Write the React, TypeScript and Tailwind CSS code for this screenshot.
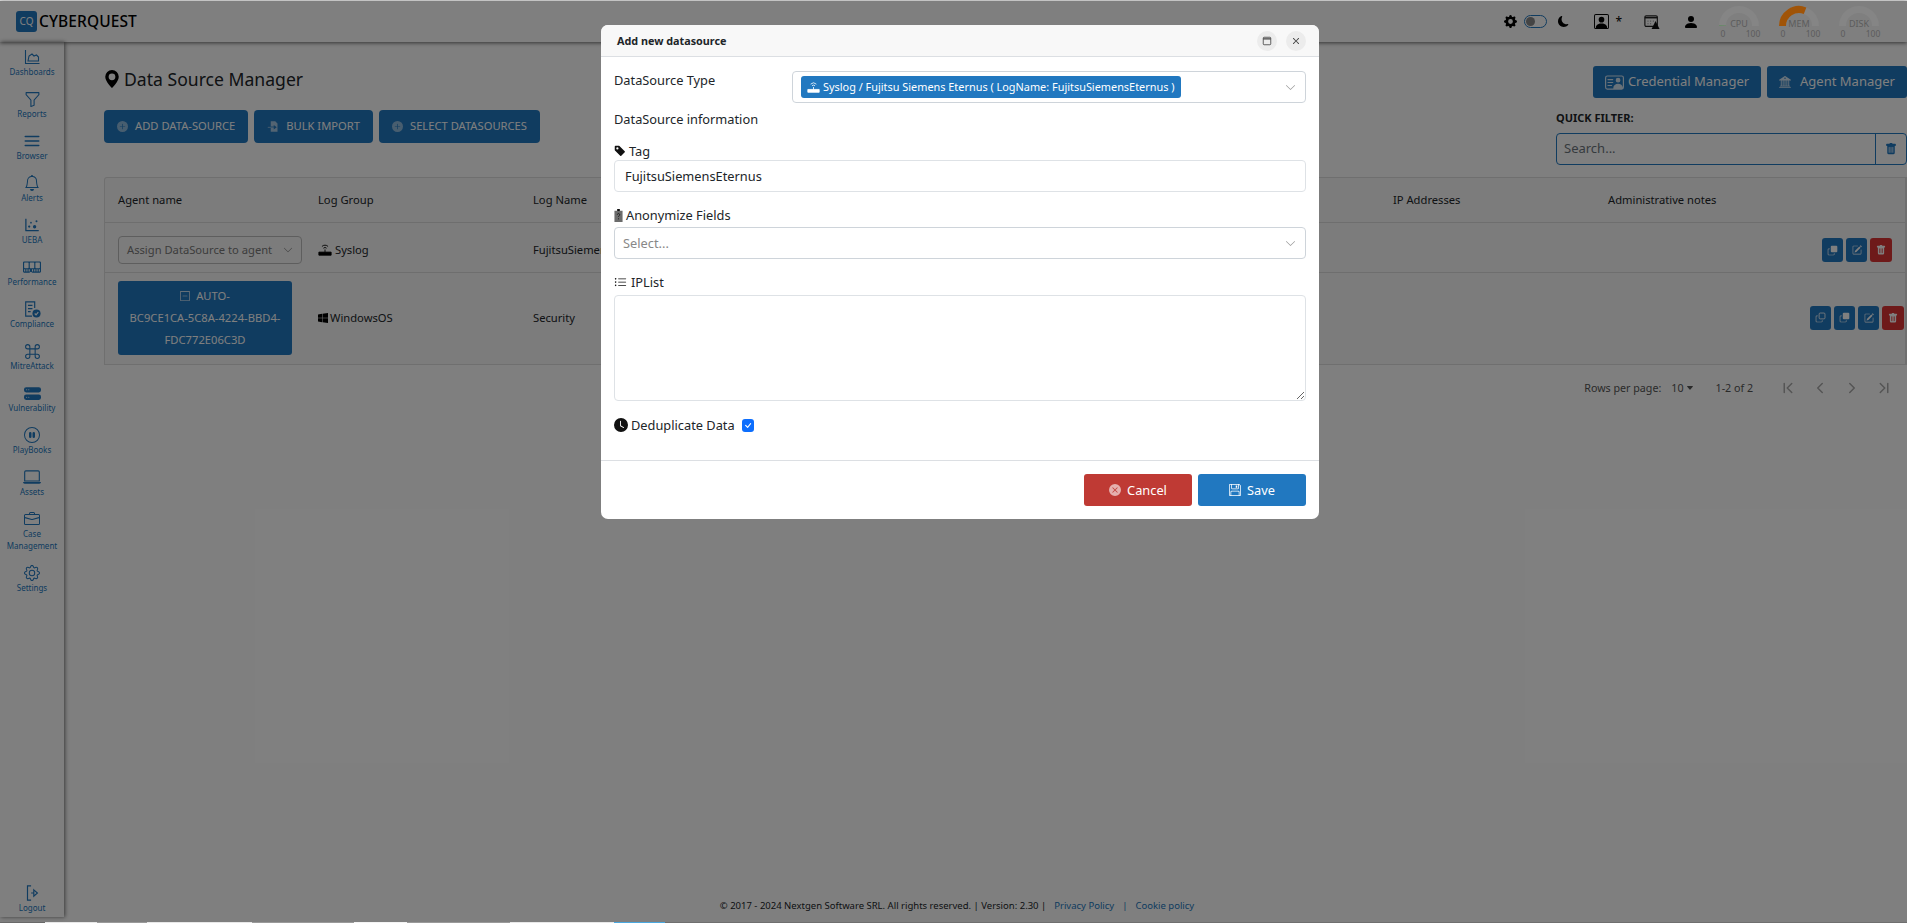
import type { ReactNode } from 'react'
import {
  BsBell, BsBriefcase, BsCaretDownFill, BsCheck, BsChevronDown, BsClockFill, BsCommand, BsDashSquare,
  BsFunnel, BsGear, BsGearFill, BsHddStackFill, BsLaptop, BsMemory, BsMoonFill, BsPencilSquare,
  BsPersonFill, BsPersonSquare, BsPersonVcard, BsPlusCircleFill, BsTagFill, BsTrashFill,
  BsWindows, BsXCircleFill, BsX, BsFloppy, BsListUl, BsPauseCircle, BsBank2, BsGeoAltFill,
} from 'react-icons/bs'
import { AiOutlineDotChart } from 'react-icons/ai'
import { LuAlignJustify, LuChevronFirst, LuChevronLast, LuChevronLeft, LuChevronRight } from 'react-icons/lu'

const DashboardIcon = () => (
  <svg viewBox="0 0 18 18" className="w-[18px] h-[18px]" fill="none" stroke="currentColor" strokeWidth={1.1}>
    <path d="M2.500 2v13.500h14" />
    <path d="M5 13l1-5 3-2 2 2 2.500-1 2 2v4z" />
  </svg>
)

const ComplianceIcon = () => (
  <svg viewBox="0 0 20 20" className="w-[18px] h-[18px]" fill="none" stroke="currentColor" strokeWidth={1.3}>
    <path d="M13 9V2H3v16h7M5.500 6h5M5.500 9.500h5M5.500 13h3" />
    <circle cx="15" cy="15" r="4.500" fill="currentColor" stroke="none" />
    <path d="M13 15l1.500 1.500 2.500-3" stroke="#fff" />
  </svg>
)

const LogoutIcon = () => (
  <svg viewBox="0 0 20 20" className="w-[18px] h-[18px]" fill="none" stroke="currentColor" strokeWidth={1.3}>
    <path d="M9 2H5v16h4" />
    <path d="M9 10h3M12 6.500l4 3.500-4 3.500z" />
  </svg>
)

const ImportIcon = () => (
  <svg viewBox="0 0 16 16" className="w-[12px] h-[13px] opacity-60" fill="currentColor">
    <path d="M5 1h6l3 3v11H5v-5h4v2l4-3-4-3v2H5z" />
    <path d="M1 8.500h8v1H1z" />
  </svg>
)

const RouterIcon = ({ className }: { className?: string }) => (
  <svg viewBox="0 0 16 14" className={className} fill="none" stroke="currentColor" strokeWidth="1">
    <path d="M4.500 3.500a5 5 0 0 1 7 0M6.200 5.500a2.600 2.600 0 0 1 3.600 0" />
    <path d="M8 7v3" />
    <path d="M1 10h14v3.500H1z" fill="currentColor" />
  </svg>
)

const AnonIcon = () => (
  <svg viewBox="0 0 10 16" className="w-[9px] h-[13px]" fill="currentColor">
    <path d="M3.500 0h3v2H10v14H0V2h3.500z" fill="#6b6b6b" />
    <path d="M3.500 0h3v2.500h-3z" fill="#111" />
    <path d="M3.500 7a1.500 1.500 0 1 1 2.300 1.300c-.6.4-.8.7-.8 1.400M5 11.500v1.200" stroke="#111" fill="none" strokeWidth="1" />
  </svg>
)

const WindowIcon = () => (
  <svg viewBox="0 0 12 12" className="w-[10px] h-[10px]" fill="none" stroke="#444" strokeWidth="1">
    <rect x="1.500" y="1.500" width="9" height="9" rx="1" />
    <path d="M1.500 3.500h9" strokeWidth="1.600" />
  </svg>
)

const CalendarAlertIcon = () => (
  <svg viewBox="0 0 18 18" className="w-[16px] h-[16px]" fill="none">
    <rect x="1" y="2" width="14" height="12" rx="1.500" stroke="#222" strokeWidth="1.300" />
    <path d="M1 4h14" stroke="#222" strokeWidth="2" />
    <path d="M4 8h1M7 8h1M10 8h1M4 11h1M7 11h1" stroke="#666" strokeWidth="1" />
    <path d="M13 8l4.500 9h-9z" fill="#111" />
  </svg>
)

// copy icon, solid front square or outlined one
const DuplicateIcon = ({ outline }: { outline?: boolean }) => (
  <svg viewBox="0 0 16 16" className="w-[11px] h-[11px]" fill="currentColor">
    {outline
      ? <rect x="6" y="1.500" width="8.500" height="8.500" rx="1.500" fill="none" stroke="currentColor" strokeWidth="1.200" />
      : <rect x="5.500" y="1" width="9.500" height="9.500" rx="1.500" />}
    <path d="M1 6.500A1.500 1.500 0 0 1 2.500 5H4v1H2.500a.5.5 0 0 0-.5.5v7a.5.5 0 0 0 .5.5h7a.5.5 0 0 0 .5-.5V12h1v1.500A1.500 1.500 0 0 1 9.500 15h-7A1.500 1.500 0 0 1 1 13.500z" />
  </svg>
)

const navItems: { label: ReactNode; icon: ReactNode; tall?: boolean }[] = [
  { label: 'Dashboards', icon: <DashboardIcon /> },
  { label: 'Reports', icon: <BsFunnel size={17} /> },
  { label: 'Browser', icon: <LuAlignJustify size={18} /> },
  { label: 'Alerts', icon: <BsBell size={16} /> },
  { label: 'UEBA', icon: <AiOutlineDotChart size={18} /> },
  { label: 'Performance', icon: <BsMemory size={18} /> },
  { label: 'Compliance', icon: <ComplianceIcon /> },
  { label: 'MitreAttack', icon: <BsCommand size={17} /> },
  { label: 'Vulnerability', icon: <BsHddStackFill size={17} /> },
  { label: 'PlayBooks', icon: <BsPauseCircle size={16} /> },
  { label: 'Assets', icon: <BsLaptop size={18} /> },
  { label: <>Case<br />Management</>, icon: <BsBriefcase size={16} />, tall: true },
  { label: 'Settings', icon: <BsGear size={16} /> },
]

const strip = [
  'w-[45px] bg-[#6a6a6a]', 'w-[52px] bg-[#e8e8e8]', 'w-[50px] bg-[#9a9a9a]', 'w-[53px] bg-[#e8e8e8]',
  'w-[52px] bg-[#e8e8e8]', 'w-[51px] bg-[#9a9a9a]', 'w-[51px] bg-[#9a9a9a]', 'w-[53px] bg-[#f4f4f4]',
  'w-[51px] bg-[#9a9a9a]', 'w-[52px] bg-[#9a9a9a]', 'w-[51px] bg-[#e8e8e8]', 'w-[53px] bg-[#e8e8e8]',
  'w-[51px] bg-[#4aa8e0]',
]

function Gauge({ label, value }: { label: string; value: number }) {
  // half-circle arc; value goes from 0 to 100
  const angle = Math.PI * (1 - value / 100)
  const x = 24 + 16.5 * Math.cos(angle)
  const y = 23 - 16.5 * Math.sin(angle)
  return (
    <svg width="48" height="36" viewBox="0 0 48 36" className="relative z-20">
      <path d="M7.500 23a16.500 16.500 0 0 1 33 0" fill="none" stroke="#858585" strokeWidth="7" />
      <path d={`M7.500 23A16.500 16.500 0 0 1 ${x} ${y}`} fill="none" stroke={value > 5 ? '#a05408' : '#5f8a5f'} strokeWidth="7" />
      <text x="24" y="24" textAnchor="middle" fontSize="9" fill="#5c5c5c">{label}</text>
      <text x="8" y="34" textAnchor="middle" fontSize="8.5" fill="#5c5c5c">0</text>
      <text x="38" y="34" textAnchor="middle" fontSize="8.5" fill="#5c5c5c">100</text>
    </svg>
  )
}

function ActionButtons({ duplicate }: { duplicate?: boolean }) {
  const blue = 'w-[21px] h-6 rounded-[3px] bg-[#2178c0] text-white flex items-center justify-center'
  return (
    <div className="flex justify-end gap-[3px]">
      {duplicate && <div className={blue}><DuplicateIcon outline /></div>}
      <div className={blue}><DuplicateIcon /></div>
      <div className={blue}><BsPencilSquare size={10} /></div>
      <div className="w-[22px] h-6 rounded-[3px] bg-[#dc3535] text-white flex items-center justify-center"><BsTrashFill size={10} /></div>
    </div>
  )
}

function PageButton({ icon, label }: { icon: ReactNode; label: string }) {
  return (
    <div className="h-[33px] px-[13px] rounded-[4px] bg-[#2178c0] text-white text-[11.2px] flex items-center gap-[7px] uppercase">
      {icon}
      {label}
    </div>
  )
}

export default function App() {
  const tableCols = 'grid grid-cols-[200px_215px_860px_215px_1fr] items-center'
  return (
    <div className="w-[1907px] h-[923px] overflow-hidden flex flex-col bg-white text-[#212529] font-['Noto_Sans',sans-serif]">
      <div className="h-px bg-[#e4e4e4] shrink-0" />

      <div className="relative h-[921px] shrink-0 flex flex-col">
        {/* Header */}
        <header className="h-[41px] shrink-0 flex items-center bg-white shadow-[0_1px_4px_rgba(0,0,0,0.6)]">
          <div className="ml-4 w-[21px] h-[21px] rounded-[3px] bg-[#2178c0] text-white text-[10px] flex items-center justify-center">CQ</div>
          <span className="ml-[2px] text-[15.5px] font-medium text-black tracking-[0.1px]">CYBERQUEST</span>
          <div className="ml-auto flex items-center">
            <BsGearFill size={13} className="text-black" />
            <div className="ml-[7px] w-[23px] h-[13px] rounded-full border border-[#2178c0] flex items-center pl-px">
              <div className="w-[9px] h-[9px] rounded-full bg-[#888]" />
            </div>
            <BsMoonFill size={11} className="ml-[11px] text-black" />
            <BsPersonSquare size={15} className="ml-[25px] text-black" />
            <span className="ml-[6px] text-xs text-black">*</span>
            <div className="ml-[22px]"><CalendarAlertIcon /></div>
            <BsPersonFill size={16} className="ml-[23px] text-black" />
            <div className="ml-[16px] mr-[24px] flex gap-[12px] -mt-px">
              <Gauge label="CPU" value={1} />
              <Gauge label="MEM" value={62} />
              <Gauge label="DISK" value={0} />
            </div>
          </div>
        </header>

        <div className="flex-1 flex min-h-0">
          {/* Sidebar */}
          <aside className="w-16 h-[875px] shrink-0 shadow-[1px_0_4px_rgba(0,0,0,0.55)] pt-[6px] pb-[3px] flex flex-col items-center text-[#2178c0]">
            {navItems.map((item, i) => (
              <div key={i} className={`w-full flex flex-col items-center ${item.tall ? 'h-[54px]' : 'h-[42px]'}`}>
                <div className="h-[18px] flex items-center justify-center">{item.icon}</div>
                <span className="text-[8px] leading-[12px] text-center">{item.label}</span>
              </div>
            ))}
            <div className="mt-auto flex flex-col items-center">
              <LogoutIcon />
              <span className="text-[8px] leading-[12px]">Logout</span>
            </div>
          </aside>

          {/* Main content */}
          <main className="flex-1 min-w-0 flex flex-col pl-10">
            <div className="flex justify-between pt-[23px]">
              <div>
                <h1 className="flex items-center text-[17.6px] leading-7 text-[#212529]">
                  <BsGeoAltFill size={18} className="text-black -ml-px mr-[3px]" />
                  Data Source Manager
                </h1>
                <div className="mt-[17px] flex gap-[6px]">
                  <PageButton icon={<BsPlusCircleFill size={11} className="opacity-50" />} label="Add data-source" />
                  <PageButton icon={<ImportIcon />} label="Bulk import" />
                  <PageButton icon={<BsPlusCircleFill size={11} className="opacity-50" />} label="Select datasources" />
                </div>
              </div>
              <div className="w-[351px] flex flex-col pt-px">
                <div className="flex gap-[6px] ml-[37px]">
                  <div className="w-[168px] h-8 rounded-[3px] bg-[#2178c0] text-white text-[13px] flex items-center justify-center gap-[4px]">
                    <BsPersonVcard size={19} className="opacity-80 -scale-x-100" />
                    Credential Manager
                  </div>
                  <div className="flex-1 h-8 rounded-[3px] bg-[#2178c0] text-white text-[13px] flex items-center justify-center gap-[9px]">
                    <BsBank2 size={12} className="opacity-80" />
                    Agent Manager
                  </div>
                </div>
                <div className="mt-3 text-[11px] leading-4 font-bold">QUICK FILTER:</div>
                <div className="mt-[7px] h-8 flex rounded-[4px] border border-[#2178c0]">
                  <input className="flex-1 min-w-0 px-[7px] text-[13px] outline-none placeholder:text-[#6c757d]" placeholder="Search..." />
                  <div className="w-[31px] border-l border-[#2178c0] flex items-center justify-center text-[#2178c0]"><BsTrashFill size={12} /></div>
                </div>
              </div>
            </div>

            {/* Data source table */}
            <section className="mt-3 border border-[#dfdfdf] border-r-2 bg-[#f8f8f8] rounded-tl-[3px] text-[11.2px]">
              <div className={`h-[45px] border-b border-[#dcdcdc] ${tableCols}`}>
                <span className="pl-[13px]">Agent name</span>
                <span className="pl-[13px]">Log Group</span>
                <span className="pl-[13px]">Log Name</span>
                <span className="pl-[13px]">IP Addresses</span>
                <span className="pl-[13px]">Administrative notes</span>
              </div>
              <div className={`h-[50px] pt-[5px] border-b border-[#dcdcdc] ${tableCols}`}>
                <div className="pl-[13px]">
                  <div className="w-[184px] h-[28px] rounded-[4px] border border-[#bdbdbd] flex items-center justify-between px-2 text-[#7a7a7a]">
                    Assign DataSource to agent
                    <BsChevronDown size={10} />
                  </div>
                </div>
                <span className="pl-[13px] flex items-center gap-[3px] text-[#212529]"><RouterIcon className="w-[14px] h-[13px] text-black" />Syslog</span>
                <span className="pl-[13px]">FujitsuSiemensEternus</span>
                <span />
                <div className="pr-[13px]"><ActionButtons /></div>
              </div>
              <div className={`h-[91px] ${tableCols}`}>
                <div className="pl-[13px]">
                  <div className="-mt-[2px] w-[174px] h-[74px] rounded-[3px] bg-[#2178c0] text-white text-center leading-[22px] py-1">
                    <BsDashSquare size={10} className="inline mr-[6px] -mt-px" />AUTO-<br />BC9CE1CA-5C8A-4224-BBD4-<br />FDC772E06C3D
                  </div>
                </div>
                <span className="pl-[13px] flex items-center gap-[2px]"><BsWindows size={10} className="text-black" />WindowsOS</span>
                <span className="pl-[13px]">Security</span>
                <span />
                <div className="pr-px -mt-[2px]"><ActionButtons duplicate /></div>
              </div>
            </section>

            <div className="h-[46px] flex items-center justify-end text-[10.7px] text-[#555]">
              <span>Rows per page:</span>
              <span className="ml-[10px] flex items-center gap-[2px]">10 <BsCaretDownFill size={8} /></span>
              <span className="ml-[22px]">1-2 of 2</span>
              <div className="ml-[26px] mr-[14px] flex gap-[14px] text-[#aaa]">
                <LuChevronFirst size={18} />
                <LuChevronLeft size={18} />
                <LuChevronRight size={18} />
                <LuChevronLast size={18} />
              </div>
            </div>

            <footer className="mt-auto mb-[9px] pr-[97px] flex justify-center gap-[6px] text-[9.5px] leading-[14px] text-[#212529]">
              <span>© 2017 - 2024 Nextgen Software SRL. All rights reserved. | Version: 2.30 |</span>
              <span className="ml-[2px] text-[#2178c0]">Privacy Policy</span>
              <span className="mx-[2px] text-[#2178c0]">|</span>
              <span className="text-[#2178c0]">Cookie policy</span>
            </footer>
          </main>
        </div>

        {/* Backdrop */}
        <div className="absolute inset-0 z-10 bg-black/50" />

        {/* Add new datasource modal */}
        <div className="absolute z-30 left-[601px] top-6 w-[718px] h-[494px] bg-white rounded-[7px] overflow-hidden flex flex-col text-[12.8px] leading-5 text-[#212529]">
          <div className="h-[32px] shrink-0 bg-[#f8f8f8] border-b border-[#dcdfe3] flex items-center pl-4 pr-[13px]">
            <span className="text-[10.8px] font-bold flex-1">Add new datasource</span>
            <div className="w-5 h-5 rounded-full bg-[#ececec] flex items-center justify-center"><WindowIcon /></div>
            <div className="ml-[9px] w-5 h-5 rounded-full bg-[#ececec] flex items-center justify-center"><BsX size={14} className="text-[#444]" /></div>
          </div>

          <div className="flex-1 px-[13px]">
            <div className="mt-[14px] flex">
              <label className="w-[178px] shrink-0 -mt-px">DataSource Type</label>
              <div className="flex-1 h-8 rounded-[4px] border border-[#ced4da] flex items-center pl-[8px] pr-[9px]">
                <span className="h-[22px] px-[6px] rounded-[3px] bg-[#2178c0] text-white text-[10.9px] flex items-center gap-[3px]">
                  <RouterIcon className="w-[13px] h-[12px]" />
                  Syslog / Fujitsu Siemens Eternus ( LogName: FujitsuSiemensEternus )
                </span>
                <BsChevronDown size={11} className="ml-auto text-[#9a9a9a]" />
              </div>
            </div>

            <div className="mt-[6px]">DataSource information</div>

            <label className="mt-[14px] h-4 flex items-center gap-[3px]"><BsTagFill size={12} className="text-[#111]" />Tag</label>
            <input
              readOnly
              value="FujitsuSiemensEternus"
              className="mt-px w-full h-8 px-[10px] rounded-[4px] border border-[#dee2e6] outline-none"
            />

            <label className="mt-[15px] h-4 flex items-center gap-[3px]"><AnonIcon />Anonymize Fields</label>
            <div className="mt-1 h-8 rounded-[4px] border border-[#ced4da] flex items-center pl-[8px] pr-[9px] text-[#888]">
              Select...
              <BsChevronDown size={11} className="ml-auto text-[#9a9a9a]" />
            </div>

            <label className="mt-[15px] h-4 flex items-center gap-1"><BsListUl size={13} className="text-[#111]" />IPList</label>
            <textarea readOnly className="mt-[5px] block w-full h-[106px] rounded-[4px] border border-[#dee2e6] outline-none" />

            <div className="mt-[14px] h-5 flex items-center">
              <BsClockFill size={14} className="text-[#111]" />
              <span className="ml-[3px]">Deduplicate Data</span>
              <span className="ml-[7px] w-[12px] h-[13px] rounded-[3px] bg-[#0d6efd] text-white flex items-center justify-center"><BsCheck size={13} /></span>
            </div>
          </div>

          <div className="h-[59px] shrink-0 border-t border-[#dcdfe3] flex items-center justify-end gap-[6px] pr-[13px]">
            <div className="w-[108px] h-8 rounded-[3px] bg-[#bf3a34] text-white flex items-center justify-center gap-[6px]">
              <BsXCircleFill size={12} className="opacity-60" />
              Cancel
            </div>
            <div className="w-[108px] h-8 rounded-[3px] bg-[#2178c0] text-white flex items-center justify-center gap-[6px]">
              <BsFloppy size={12} />
              Save
            </div>
          </div>
        </div>
      </div>

      <div className="h-px flex shrink-0 bg-[#6f6f6f]">
        {strip.map((segment, i) => (
          <div key={i} className={segment} />
        ))}
      </div>
    </div>
  )
}
